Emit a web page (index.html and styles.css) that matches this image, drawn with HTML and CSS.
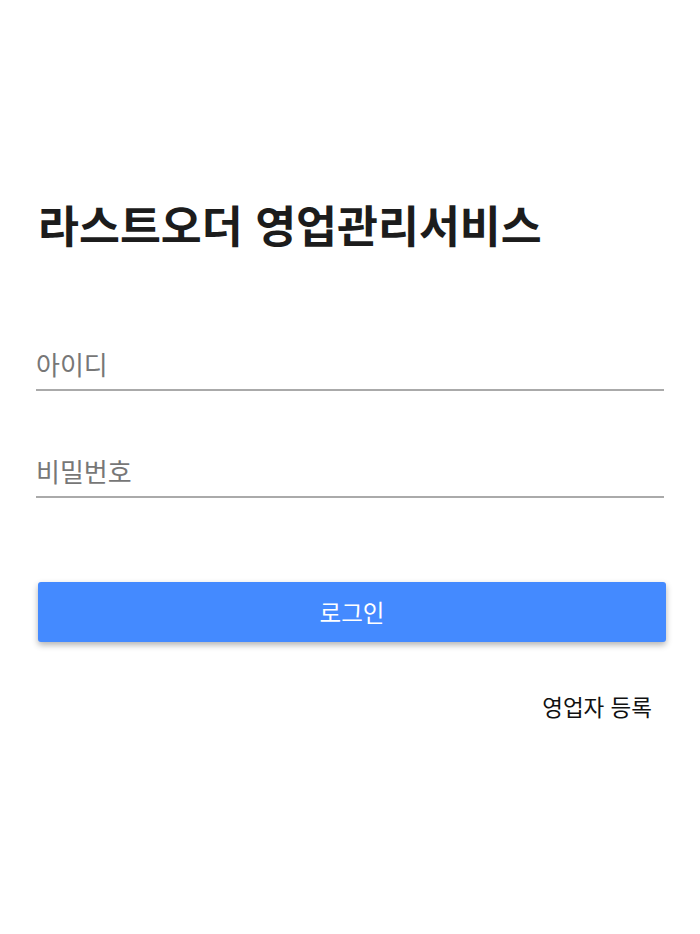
FILE: index.html
```
<!DOCTYPE html>
<html lang="ko">
<head>
<meta charset="utf-8">
<title>라스트오더 영업관리서비스</title>
<link rel="stylesheet" href="styles.css">
</head>
<body>
	<main class="login">
		<h1 class="title">라스트오더 영업관리서비스</h1>
		<form class="loginForm">
			<input class="field" type="text" placeholder="아이디">
			<input class="field" type="password" placeholder="비밀번호">
			<button class="loginButton" type="button">로그인</button>
		</form>
		<div class="links">
			<a class="register" href="#">영업자 등록</a>
		</div>
	</main>
</body>
</html>
```

FILE: styles.css
```
body{
	margin:0;
	font-family:"Noto Sans CJK KR", "Noto Sans", sans-serif;
	background-color:#fff;
	color:#111;
}
.login{
	padding:188px 36px 0 36px;
}
.title{
	margin:0 0 0 2px;
	font-size:44.5px;
	font-weight:700;
	line-height:72px;
	color:#1c1c1c;
}
.loginForm{
	display:flex;
	flex-direction:column;
	margin-top:81px;
}
.field{
	font-family:inherit;
	font-size:26px;
	color:#333;
	border:none;
	border-bottom:2px solid #aaa;
	padding:0 0 4px 0;
	height:44px;
	outline:none;
	background:transparent;
	margin-bottom:57px;
}
.field::placeholder{
	color:#777;
}
.loginButton{
	margin:27px -2px 0 2px;
	height:60px;
	border:none;
	border-radius:3px;
	background-color:#448aff;
	color:#fff;
	font-family:inherit;
	font-size:23.5px;
	box-shadow:0 3px 6px rgba(0,0,0,0.3);
}
.links{
	display:flex;
	justify-content:flex-end;
	margin-top:48px;
	padding-right:12px;
}
.register{
	color:#111;
	text-decoration:none;
	font-size:22.5px;
}
```
